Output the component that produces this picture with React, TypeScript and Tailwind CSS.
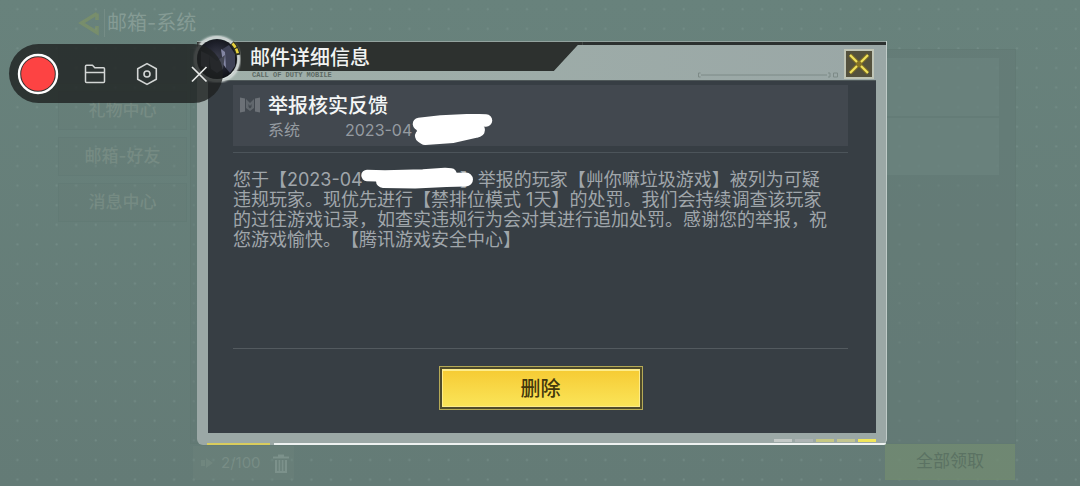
import React, { useState } from "react";

const tabs = ["", "礼物中心", "邮箱-好友", "消息中心"];

const segments = [
  "bg-[#c3c9c7]",
  "bg-[#adb4b4]",
  "bg-[#c5c783]",
  "bg-[#c2c590]",
  "bg-[#f0e65a]",
];

function DotGrid() {
  return (
    <svg className="absolute inset-0 h-full w-full" aria-hidden="true">
      <defs>
        <pattern id="dots" width="19.6" height="19.6" patternUnits="userSpaceOnUse">
          <circle cx="17.4" cy="9.2" r="1.1" fill="#7b958f" fillOpacity="0.55" />
        </pattern>
      </defs>
      <rect width="100%" height="100%" fill="url(#dots)" />
    </svg>
  );
}

function Orb() {
  return (
    <svg
      className="absolute -top-1.5 -left-1 h-12 w-12"
      viewBox="0 0 48 48"
      fill="none"
      aria-hidden="true"
    >
      <defs>
        <radialGradient id="orb" cx="0.5" cy="0.45" r="0.55">
          <stop offset="0" stopColor="#3a3c4b" />
          <stop offset="0.6" stopColor="#1f212c" />
          <stop offset="1" stopColor="#0f1116" />
        </radialGradient>
        <filter id="glow" x="-20%" y="-20%" width="140%" height="140%">
          <feGaussianBlur stdDeviation="1" />
        </filter>
      </defs>
      <circle cx="24" cy="24" r="21.5" stroke="#e4ebe9" strokeWidth="3.5" filter="url(#glow)" />
      <circle cx="24" cy="24" r="22" stroke="#c9cfce" strokeWidth="1.4" />
      <circle cx="24" cy="24" r="20" fill="url(#orb)" />
      <path d="M28 15l8-5 6 9v12l-5 7-5-6z" fill="#3f4256" />
      <path d="M28 14l4 3 1 16-3-4z" fill="#8386a3" />
      <path d="M8 16l8 4v14l-8-3zM32 20l-8 6-8-6 2 14 6 4 6-4z" fill="#454855" />
      <path d="M39 8a22 22 0 016 12" stroke="#2b2d22" strokeWidth="5" />
      <path d="M39.500 8.500a22 22 0 015.500 11" stroke="#e8d23c" strokeWidth="2.600" strokeDasharray="5 1.200" />
    </svg>
  );
}

function MailBadge() {
  return (
    <svg className="mt-3 h-4 w-5 shrink-0" viewBox="0 0 20 16" fill="#6c7177" aria-hidden="true">
      <path d="M0 .5l5 1v13l-5 1zM20 .5l-5 1v13l5 1z" />
      <path d="M6 2l4 4 4-4v9l-4 3-4-3z" fillOpacity="0.75" />
      <path d="M8.500 7L10 9l1.500-2v3L10 11.500 8.500 10z" fill="#42484f" />
    </svg>
  );
}

function Recorder() {
  return (
    <div className="absolute top-11 left-[9px] z-20 flex h-[59px] w-[214px] items-center rounded-full bg-[#1e2120]/80 pl-2">
      <button aria-label="Record" className="h-[42px] w-[42px] rounded-full">
        <svg viewBox="0 0 42 42" className="h-full w-full">
          <circle cx="21" cy="21" r="19" fill="#33302f" stroke="#fff" strokeWidth="2.400" />
          <circle cx="21" cy="21" r="16.800" fill="#fd4343" />
        </svg>
      </button>
      <button aria-label="Files" className="ml-6 h-6 w-6">
        <svg viewBox="0 0 24 24" fill="none" stroke="#d3d6d5" strokeWidth="1.500" strokeLinejoin="round" className="h-full w-full">
          <path d="M2.500 19.500V4.200q0-1 1-1h6l2.300 2.600h8.700q1 0 1 1v12.700q0 1-1 1h-17q-1 0-1-1z" />
          <path d="M2.500 10.500h19" />
        </svg>
      </button>
      <button aria-label="Settings" className="ml-7 h-6 w-6">
        <svg viewBox="0 0 24 24" fill="none" stroke="#d3d6d5" strokeWidth="1.600" strokeLinejoin="round" className="h-full w-full">
          <path d="M12 1.600l9.300 5.100v10.600L12 22.400l-9.300-5.100V6.700z" />
          <circle cx="12" cy="12" r="3" />
        </svg>
      </button>
      <button aria-label="Close recorder" className="ml-7 h-6 w-6">
        <svg viewBox="0 0 24 24" fill="none" stroke="#e6e8e7" strokeWidth="1.700" className="h-full w-full">
          <path d="M5 5l14.500 14.500M19.500 5L5 19.500" />
        </svg>
      </button>
    </div>
  );
}

function MailPage() {
  return (
    <div className="relative flex min-h-screen flex-col text-[#8ba19a]/60">
      <header className="flex h-[45px] items-center pl-[78px]">
        <a href="#back" aria-label="返回" className="h-[26px] w-[22px]">
          <svg viewBox="0 0 22 26" className="h-full w-full" fill="none" stroke="#879a5c" strokeOpacity="0.5" strokeWidth="3.500">
            <path d="M19 3.500L3.500 13 19 22.500V16M19 10V3.500" />
          </svg>
        </a>
        <h1 className="ml-1 border-l border-[#7f958e]/60 pl-0.5 text-xl leading-7 text-[#93a7a0]/70">邮箱-系统</h1>
      </header>

      <main className="flex flex-1">
        <nav className="flex w-[190px] flex-col gap-[7px] pr-[3px] pl-[58px]">
          {tabs.map((tab, i) => (
            <button
              key={i}
              aria-label={tab || "邮箱"}
              className="h-[39px] border border-[#5f7972]/40 bg-[#627a74]/20 text-[17px] font-medium text-[#86998f]/50"
            >
              {tab}
            </button>
          ))}
        </nav>
        <section className="mt-1 mr-16 flex flex-1 flex-col gap-0.5 border border-[#5e7771]/40 bg-[#627874]/50 pt-2 pr-4 pl-5">
          <div className="h-[58px] bg-[#6d8580]/60" />
          <div className="h-[57px] bg-[#6d8580]/60" />
        </section>
      </main>

      <footer className="flex items-end justify-between pr-[65px] pb-1.5 pl-[193px]">
        <div className="flex h-[34px] w-[101px] items-center bg-[#6d857e]/40 pl-1.5 text-[15px] text-[#83978f]/60">
          <svg viewBox="0 0 18 12" className="h-3 w-[18px]" fill="currentColor" fillOpacity="0.5" aria-hidden="true">
            <path d="M2 3h4v6H2zM7 1l7 5-7 5z" />
          </svg>
          <span className="ml-1">2/100</span>
          <button aria-label="清空" className="ml-3 h-5 w-4">
            <svg viewBox="0 0 16 20" className="h-full w-full" fill="#8a9f97" fillOpacity="0.6">
              <path d="M0 3.500h5V1.500h6v2h5v2H0zM2 7h2.200v11h1.300V7h1.800v11h1.400V7h1.800v11h1.300V7H14v13H2z" />
            </svg>
          </button>
        </div>
        <button className="h-9 w-[130px] border border-[#6f8870]/60 bg-[#728b72]/80 text-[17px] text-[#5b7263]">
          全部领取
        </button>
      </footer>
    </div>
  );
}

function MailDialog({ onClose }: { onClose: () => void }) {
  return (
    <div
      role="dialog"
      aria-labelledby="dialog-title"
      className="relative rounded-md rounded-t-none border-r border-[#c0cbc8] bg-[#9ba8a6]"
    >
      {/* Title bar */}
      <div className="flex h-[39px] border-t border-[#93a39f] bg-gradient-to-r from-[#a0b0aa] to-[#9aa7a6]">
        <div className="w-[56%]">
          <div className="h-[29px] bg-[#2d312f] pl-[53px] [clip-path:polygon(0_0,100%_0,100%_3px,calc(100%_-_5px)_3px,calc(100%_-_29px)_100%,0_100%)]">
            <h2 id="dialog-title" className="text-xl leading-8 font-medium text-[#f1f3f2]">
              邮件详细信息
            </h2>
          </div>
          <p className="pl-[55px] font-['Liberation_Mono',monospace] text-[7px] leading-[9px] font-bold text-[#5d6a64]">
            CALL OF DUTY MOBILE
          </p>
        </div>
        <div className="flex flex-1 flex-col border-t-3 border-[#2b302f]">
          <div className="flex items-end justify-end gap-1.5 pt-1 pr-[12px]">
            <svg viewBox="0 0 140 6" className="mb-px h-1.5 w-[140px]" fill="none" stroke="#7d8a87" aria-hidden="true">
              <path d="M2.500 1H.5v4h2M3 3h126M130 1h2v4h-2M135.500 1h4v4h-4z" />
            </svg>
            <button
              onClick={onClose}
              aria-label="关闭"
              className="h-[30px] w-[30px] border-2 border-[#c0c5b6] bg-[#54513d]"
            >
              <svg viewBox="0 0 26 26" className="h-full w-full" fill="none">
                <path d="M4 4l7 7M22 4l-7 7M4 22l7-7M22 22l-7-7M11 11l4 4M15 11l-4 4" stroke="#a98b16" strokeOpacity="0.6" strokeWidth="4" />
                <path d="M4 4l7 7M22 4l-7 7M4 22l7-7M22 22l-7-7" stroke="#f0e35c" strokeWidth="2" />
              </svg>
            </button>
          </div>
        </div>
      </div>

      {/* Content */}
      <div className="mr-2.5 ml-[11px] border-t border-[#4f5859] bg-[#373e44] pt-1 pr-7 pb-[23px] pl-[25px]">
        <div className="flex h-[61px] bg-[#42484f] pl-[7px]">
          <MailBadge />
          <div className="ml-2">
            <h3 className="pt-[7px] text-xl leading-7 font-medium text-[#f4f6f6]">举报核实反馈</h3>
            <p className="flex gap-[45px] text-base leading-5 text-[#959ba1]">
              <span>系统</span>
              <span className="relative">
                2023-04
                <svg viewBox="0 0 82 32" className="absolute -top-1.5 left-[67px] h-8 w-[82px]" fill="none" stroke="#fff" strokeLinecap="round" strokeLinejoin="round" aria-hidden="true">
                  <path d="M7 10l22-2.500 31-1.500 14 .5" strokeWidth="12.500" />
                  <path d="M10 22l3 2 28-2 22-5 3-1" strokeWidth="14" />
                  <path d="M10 15h55" strokeWidth="11" />
                </svg>
              </span>
            </p>
          </div>
        </div>
        <hr className="mt-1.5 border-[#4c545a]" />
        <p className="mt-[17px] text-lg leading-5 whitespace-nowrap text-[#a0a6ab] [text-spacing-trim:space-all]">
          您于【2023-04
          <span className="relative inline-block h-4 w-[97px] align-middle">
            <svg viewBox="0 0 113 22" className="absolute -top-1.5 -left-0.5 z-10 h-[22px] w-[113px]" fill="none" stroke="#fff" strokeLinecap="round" strokeLinejoin="round" aria-hidden="true">
              <path d="M6 8.500l18 .5 38-1 22-1.500 6 .5" strokeWidth="11.500" />
              <path d="M22 14l32 .5 31-1.500 20-.5" strokeWidth="14" />
            </svg>
          </span>
          】举报的玩家【艸你嘛垃圾游戏】被列为可疑
          <br />
          违规玩家。现优先进行【禁排位模式 1天】的处罚。我们会持续调查该玩家
          <br />
          的过往游戏记录，如查实违规行为会对其进行追加处罚。感谢您的举报，祝
          <br />
          您游戏愉快。【腾讯游戏安全中心】
        </p>
        <hr className="mt-[98px] border-[#535a5f]" />
        <div className="mt-[17px] flex justify-center">
          <button
            onClick={onClose}
            className="h-11 w-[204px] border border-[#b5aa57] bg-[#4f4b2b] p-0.5 text-xl font-medium text-[#43380c]"
          >
            <span className="flex h-full items-center justify-center border-x border-t-2 border-b border-[#fdec8b] bg-gradient-to-b from-[#f6cc34] to-[#fae457]">
              删除
            </span>
          </button>
        </div>
      </div>

      {/* Bottom edge */}
      <div className="flex h-2.5 items-end justify-end gap-[3px] pr-2.5 pb-px">
        {segments.map((color, i) => (
          <span key={i} className={`h-[3px] w-[18px] ${color}`} />
        ))}
      </div>
      <div className="flex h-0.5 gap-1 pl-2.5">
        <span className="w-[63px] bg-[#d9cc5c]" />
        <span className="flex-1 rounded-br bg-[#eef2f1]" />
      </div>

      <Orb />
    </div>
  );
}

export default function App() {
  const [open, setOpen] = useState(true);

  return (
    <div className="relative min-h-screen overflow-hidden bg-[#657c77] bg-gradient-to-b from-[#68827c] to-[#647b76] font-['Inter','Noto_Sans_CJK_SC',sans-serif]">
      <DotGrid />
      <MailPage />
      {open && (
        <div className="absolute inset-0 z-10 pt-[41px] pr-[193px] pl-[197px]">
          <MailDialog onClose={() => setOpen(false)} />
        </div>
      )}
      <Recorder />
    </div>
  );
}
